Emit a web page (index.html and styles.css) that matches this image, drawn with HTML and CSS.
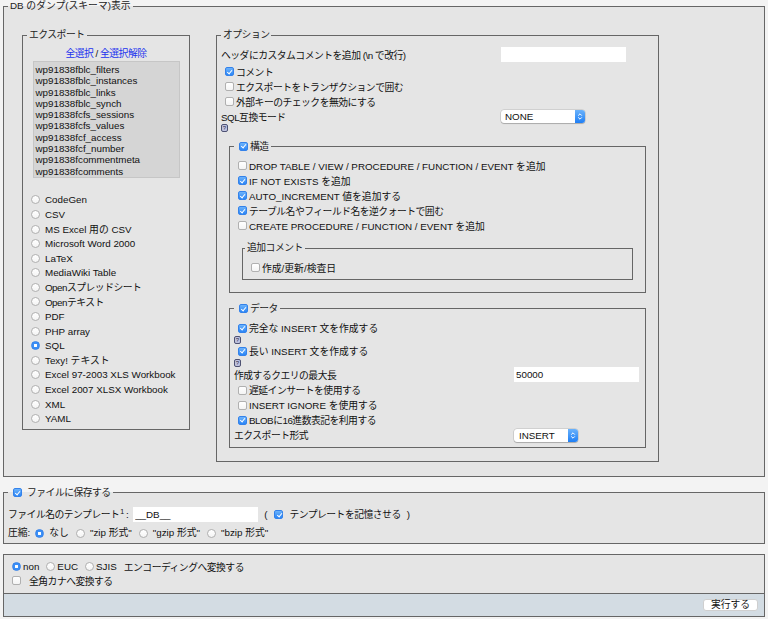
FILE: index.html
```html
<!DOCTYPE html>
<html lang="ja">
<head>
    <meta charset="UTF-8">
    <meta name="viewport" content="width=device-width, initial-scale=1.0">
    <title>DB のダンプ(スキーマ)表示</title>
    <link rel="stylesheet" href="styles.css">
</head>
<body>
    <form class="dump-form" action="#">
        <fieldset class="dump">
            <legend>DB のダンプ(スキーマ)表示</legend>
            <div class="dump-body">
                <fieldset class="export">
                    <legend class="ja">エクスポート</legend>
                    <div class="select-links ja"><a href="#">全選択</a> / <a href="#">全選択解除</a></div>
                    <ul class="table-list">
                        <li>wp91838fblc_filters</li>
                        <li>wp91838fblc_instances</li>
                        <li>wp91838fblc_links</li>
                        <li>wp91838fblc_synch</li>
                        <li>wp91838fcfs_sessions</li>
                        <li>wp91838fcfs_values</li>
                        <li>wp91838fcf_access</li>
                        <li>wp91838fcf_number</li>
                        <li>wp91838fcommentmeta</li>
                        <li>wp91838fcomments</li>
                    </ul>
                    <ul class="formats">
                        <li><label><input type="radio" name="what">CodeGen</label></li>
                        <li><label><input type="radio" name="what">CSV</label></li>
                        <li><label><input type="radio" name="what">MS Excel 用の CSV</label></li>
                        <li><label><input type="radio" name="what">Microsoft Word 2000</label></li>
                        <li><label><input type="radio" name="what">LaTeX</label></li>
                        <li><label><input type="radio" name="what">MediaWiki Table</label></li>
                        <li><label class="ja"><input type="radio" name="what">Openスプレッドシート</label></li>
                        <li><label class="ja"><input type="radio" name="what">Openテキスト</label></li>
                        <li><label><input type="radio" name="what">PDF</label></li>
                        <li><label><input type="radio" name="what">PHP array</label></li>
                        <li><label><input type="radio" name="what" checked>SQL</label></li>
                        <li><label><input type="radio" name="what">Texy! テキスト</label></li>
                        <li><label><input type="radio" name="what">Excel 97-2003 XLS Workbook</label></li>
                        <li><label><input type="radio" name="what">Excel 2007 XLSX Workbook</label></li>
                        <li><label><input type="radio" name="what">XML</label></li>
                        <li><label><input type="radio" name="what">YAML</label></li>
                    </ul>
                </fieldset>

                <fieldset class="options">
                    <legend class="ja">オプション</legend>
                    <div class="row row-first">
                        <span class="label ja">ヘッダにカスタムコメントを追加 (\n で改行)</span>
                        <input type="text" class="text">
                    </div>
                    <label class="row ja"><input type="checkbox" checked>コメント</label>
                    <label class="row ja"><input type="checkbox">エクスポートをトランザクションで囲む</label>
                    <label class="row ja"><input type="checkbox">外部キーのチェックを無効にする</label>
                    <div class="row">
                        <span class="label ja">SQL互換モード</span>
                        <span class="select select-compat">
                            <select><option>NONE</option></select>
                            <span class="select-cap"><svg width="6" height="9" viewBox="0 0 6 9"><path d="M1.2 3.6 3 1.8 4.8 3.6M1.2 5.4 3 7.2 4.8 5.4" fill="none" stroke="#fff" stroke-width="1"/></svg></span>
                        </span>
                    </div>
                    <div class="help-row"><span class="help"><svg width="7" height="8" viewBox="0 0 7 8"><rect x=".5" y=".5" width="6" height="7" rx="1.5" fill="#bfc2df" stroke="#4d5172"/><text x="3.5" y="6.2" font-size="6" font-family="Liberation Sans, sans-serif" text-anchor="middle" fill="#2c2f44">?</text></svg></span></div>

                    <fieldset class="sub structure">
                        <legend class="ja"><input type="checkbox" checked>構造</legend>
                        <label class="row"><input type="checkbox">DROP TABLE / VIEW / PROCEDURE / FUNCTION / EVENT を追加</label>
                        <label class="row"><input type="checkbox" checked>IF NOT EXISTS を追加</label>
                        <label class="row"><input type="checkbox" checked>AUTO_INCREMENT 値を追加する</label>
                        <label class="row ja"><input type="checkbox" checked>テーブル名やフィールド名を逆クォートで囲む</label>
                        <label class="row"><input type="checkbox">CREATE PROCEDURE / FUNCTION / EVENT を追加</label>
                        <fieldset class="sub extra-comments">
                            <legend class="ja">追加コメント</legend>
                            <label class="row"><input type="checkbox">作成/更新/検査日</label>
                        </fieldset>
                    </fieldset>

                    <fieldset class="sub data">
                        <legend class="ja"><input type="checkbox" checked>データ</legend>
                        <label class="row"><input type="checkbox" checked>完全な INSERT 文を作成する</label>
                        <div class="help-row"><span class="help"><svg width="7" height="8" viewBox="0 0 7 8"><rect x=".5" y=".5" width="6" height="7" rx="1.5" fill="#bfc2df" stroke="#4d5172"/><text x="3.5" y="6.2" font-size="6" font-family="Liberation Sans, sans-serif" text-anchor="middle" fill="#2c2f44">?</text></svg></span></div>
                        <label class="row"><input type="checkbox" checked>長い INSERT 文を作成する</label>
                        <div class="help-row"><span class="help"><svg width="7" height="8" viewBox="0 0 7 8"><rect x=".5" y=".5" width="6" height="7" rx="1.5" fill="#bfc2df" stroke="#4d5172"/><text x="3.5" y="6.2" font-size="6" font-family="Liberation Sans, sans-serif" text-anchor="middle" fill="#2c2f44">?</text></svg></span></div>
                        <div class="row row-input">
                            <span class="label ja">作成するクエリの最大長</span>
                            <input type="text" class="text" value="50000">
                        </div>
                        <label class="row ja"><input type="checkbox">遅延インサートを使用する</label>
                        <label class="row"><input type="checkbox">INSERT IGNORE を使用する</label>
                        <label class="row ja"><input type="checkbox" checked>BLOBに16進数表記を利用する</label>
                        <div class="row">
                            <span class="label ja">エクスポート形式</span>
                            <span class="select select-type">
                                <select><option>INSERT</option></select>
                                <span class="select-cap"><svg width="6" height="9" viewBox="0 0 6 9"><path d="M1.2 3.6 3 1.8 4.8 3.6M1.2 5.4 3 7.2 4.8 5.4" fill="none" stroke="#fff" stroke-width="1"/></svg></span>
                            </span>
                        </div>
                    </fieldset>
                </fieldset>
            </div>
        </fieldset>

        <fieldset class="save">
            <legend class="ja"><input type="checkbox" checked>ファイルに保存する</legend>
            <div class="row row-file">
                <span class="ja">ファイル名のテンプレート<sup>1</sup> :</span>
                <input type="text" class="text" value="__DB__">
                <span>(</span>
                <label class="remember ja"><input type="checkbox" checked>テンプレートを記憶させる</label>
                <span>)</span>
            </div>
            <div class="row row-compress">
                <span>圧縮:</span>
                <label><input type="radio" name="compression" checked>なし</label>
                <label><input type="radio" name="compression">"zip 形式"</label>
                <label><input type="radio" name="compression">"gzip 形式"</label>
                <label><input type="radio" name="compression">"bzip 形式"</label>
            </div>
        </fieldset>

        <div class="encoding">
            <div class="encoding-body">
                <div class="row row-enc">
                    <label><input type="radio" name="charset" checked>non</label>
                    <label><input type="radio" name="charset">EUC</label>
                    <label><input type="radio" name="charset">SJIS</label>
                    <span class="enc-text ja">エンコーディングへ変換する</span>
                </div>
                <label class="row row-kana ja"><input type="checkbox">全角カナへ変換する</label>
            </div>
            <div class="footer">
                <button type="submit" class="go-btn">実行する</button>
            </div>
        </div>
    </form>
</body>
</html>
```

FILE: styles.css
```css
* {
    box-sizing: border-box;
}
html, body {
    margin: 0;
    padding: 0;
}
body {
    background-color: #f3f3f3;
    font-family: "Liberation Sans", "Noto Sans CJK JP", sans-serif;
    font-size: 9.8px;
    color: #111;
}
fieldset {
    margin: 0;
    padding: 0 4px;
    min-width: 0;
    border: 1px solid #666;
    background-color: #e5e5e5;
}
legend {
    padding: 0 2px;
    line-height: 14px;
    color: #222;
}
ul {
    list-style: none;
    margin: 0;
    padding: 0;
}
a {
    color: #2233ee;
    text-decoration: none;
}
/* Japanese labels run a little tighter than the Latin ones */
.ja {
    letter-spacing: -0.5px;
}

/* form controls */
input[type="checkbox"],
input[type="radio"] {
    -webkit-appearance: none;
    appearance: none;
    flex: none;
    width: 9px;
    height: 9px;
    margin: 0 2px 0 4px;
    border: 1px solid #b0b0b0;
    background: linear-gradient(#ffffff, #f4f4f4);
    position: relative;
}
input[type="checkbox"] {
    border-radius: 2px;
}
input[type="radio"] {
    border-radius: 50%;
}
input[type="checkbox"]:checked {
    border-color: #3482ea;
    background: linear-gradient(#6db3fb, #2a85f6);
}
input[type="checkbox"]:checked::after {
    content: "";
    position: absolute;
    left: 2.4px;
    top: 0.6px;
    width: 2px;
    height: 4.4px;
    border: solid #fff;
    border-width: 0 1.3px 1.3px 0;
    transform: rotate(40deg);
}
input[type="radio"]:checked {
    border-color: #3482ea;
    background: radial-gradient(circle, #fff 0 1.4px, #3a8ef6 1.9px);
}
.text {
    width: 125px;
    height: 15px;
    padding: 0 2px;
    border: none;
    background-color: #fff;
    font: inherit;
    letter-spacing: normal;
    color: #111;
    outline: none;
}
.select {
    display: inline-flex;
    height: 13px;
    border-radius: 3px;
    background-color: #fff;
    box-shadow: 0 0 0 0.5px rgba(0,0,0,0.18), 0 1px 1px rgba(0,0,0,0.18);
}
.select select {
    -webkit-appearance: none;
    appearance: none;
    flex: 1;
    min-width: 0;
    height: 13px;
    padding: 0 0 0 4px;
    border: none;
    background: transparent;
    font: inherit;
    color: #111;
    outline: none;
}
.select-cap {
    flex: none;
    width: 10px;
    display: flex;
    align-items: center;
    justify-content: center;
    border-radius: 0 3px 3px 0;
    background: linear-gradient(#6ab2fb, #1f7ff5);
}
.select-compat {
    width: 84px;
}
.select-type {
    width: 64px;
}
.select-type select {
    padding-left: 5px;
}
.help-row {
    height: 8px;
    display: flex;
    align-items: center;
}
.help {
    display: block;
    height: 8px;
}
.help svg {
    display: block;
}

/* rows */
.row {
    display: flex;
    align-items: center;
    height: 15px;
    white-space: nowrap;
}
.label {
    width: 280px;
    flex: none;
}

/* main dump fieldset */
.dump {
    margin: 0 3px;
    padding: 0;
}
.dump > legend {
    margin-left: 4px;
    line-height: 12px;
}
.dump-body {
    display: flex;
    align-items: flex-start;
    gap: 26px;
    padding: 16px 0 14px 18px;
}

/* export */
.export {
    width: 168px;
    padding: 0 4px 3px;
}
.select-links {
    height: 14px;
    line-height: 14px;
    margin-top: 5px;
    text-align: center;
}
.table-list {
    width: 147px;
    margin: 0 auto;
    padding: 2px 0 0 2px;
    border: 1px solid #c6c6c6;
    background-color: #d5d5d5;
}
.table-list li {
    line-height: 11.3px;
    height: 11.3px;
}
.formats {
    margin-top: 14.7px;
}
.formats li {
    height: 14.58px;
}
.formats label {
    display: flex;
    align-items: center;
    height: 100%;
}
.formats input[type="radio"] {
    margin: 0 5px 0 4px;
}

/* options */
.options {
    width: 443px;
    padding: 0 4px 12.7px;
}
.row-first {
    height: 19px;
    margin-top: 3px;
}
.sub {
    margin: 0 8px;
    padding: 4.8px 4px 4.5px;
}
.sub > legend input[type="checkbox"] {
    margin: 0 2px 0 3px;
    vertical-align: -1px;
}
.structure {
    margin-top: 7.7px;
    padding-bottom: 0;
}
.extra-comments {
    margin-top: 7.8px;
    margin-bottom: 12px;
    padding: 5px 4px 4px;
}
.extra-comments > legend {
    margin-left: -2px;
}
.data {
    margin-top: 8.7px;
}
.row-input {
    height: 16px;
}

/* save to file */
.save {
    margin: 9px 3px 0;
    padding: 6px 4px 1.7px;
}
.save > legend input[type="checkbox"] {
    margin: 0 5px 0 3px;
    vertical-align: -1px;
}
.row-file {
    height: 17px;
}
.row-file sup {
    font-size: 7px;
    line-height: 0;
    vertical-align: 4px;
    margin-left: 1px;
}
.row-file .text {
    margin: 0 6px 0 5px;
}
.remember input[type="checkbox"] {
    margin: 0 6px 0 7px;
}
.remember {
    display: flex;
    align-items: center;
    margin-right: 6px;
}
.row-compress {
    height: 17px;
    margin-top: 1px;
}
.row-compress label {
    display: flex;
    align-items: center;
    margin-right: 2px;
}
.row-compress input[type="radio"] {
    margin: 3px 5px 0 5px;
}

/* encoding */
.encoding {
    margin: 10px 3px 0;
    border: 1px solid #666;
    background-color: #e5e5e5;
}
.encoding-body {
    padding: 5px 4px 5.6px;
}
.row-enc,
.row-kana {
    height: 14px;
}
.row-enc label {
    display: flex;
    align-items: center;
    margin-right: 3px;
}
.row-enc input[type="radio"] {
    margin: 0 2px 0 4px;
}
.enc-text {
    margin-left: 4px;
}
.row-kana input[type="checkbox"] {
    margin: 0 8px 0 4px;
}
.footer {
    display: flex;
    justify-content: flex-end;
    align-items: center;
    height: 23px;
    padding: 0 6px;
    border-top: 1px solid #666;
    background-color: #d3dce3;
}
.go-btn {
    width: 55px;
    height: 12px;
    padding: 0;
    border: 1px solid #cfcfcf;
    border-radius: 3px;
    background-color: #fff;
    font: inherit;
    line-height: 10px;
    color: #111;
}
```
